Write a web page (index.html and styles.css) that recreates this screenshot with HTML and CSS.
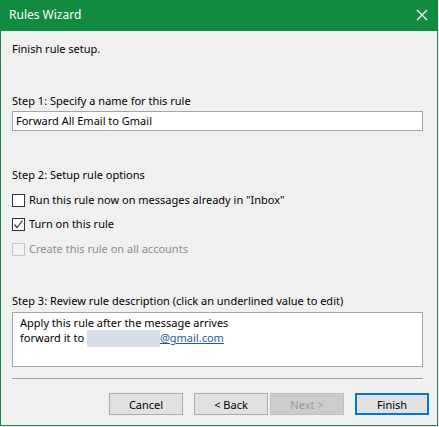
FILE: index.html
```html
<!DOCTYPE html>
<html>
<head>
<meta charset="utf-8">
<title>Rules Wizard</title>
<link rel="stylesheet" href="styles.css">
</head>
<body>
<div class="window">
  <div class="titlebar">
    <span class="title">Rules Wizard</span>
    <svg class="close" width="12" height="12" viewBox="0 0 12 12"><path d="M1 1 L11 11 M11 1 L1 11" stroke="#fff" stroke-width="1.1" fill="none"/></svg>
  </div>
  <div class="content">
    <div class="line intro">Finish rule setup.</div>

    <div class="line step">Step 1: Specify a name for this rule</div>
    <div class="textbox">Forward All Email to Gmail</div>

    <div class="line step">Step 2: Setup rule options</div>
    <div class="options">
      <div class="option"><span class="check"></span><span>Run this rule now on messages already in "Inbox"</span></div>
      <div class="option"><span class="check checked"><svg width="11" height="11" viewBox="0 0 11 11"><path d="M1.5 5.5 L4 8.5 L9.5 1.5" stroke="#333" stroke-width="1.2" fill="none"/></svg></span><span>Turn on this rule</span></div>
      <div class="option disabled"><span class="check"></span><span>Create this rule on all accounts</span></div>
    </div>

    <div class="line step">Step 3: Review rule description (click an underlined value to edit)</div>
    <div class="description">
      <div class="desc-line">Apply this rule after the message arrives</div>
      <div class="desc-line">forward it to <span class="redacted"></span><a class="link">@gmail.com</a></div>
    </div>

    <div class="separator"></div>
  </div>
  <div class="buttons">
    <button class="btn">Cancel</button>
    <button class="btn back">&lt; Back</button>
    <button class="btn next" disabled>Next &gt;</button>
    <button class="btn finish">Finish</button>
  </div>
</div>
</body>
</html>
```

FILE: styles.css
```css
html, body {
  margin: 0;
  padding: 0;
  background: #f0f0f0;
}
body {
  font-family: "Noto Sans", "Open Sans", sans-serif;
  font-size: 11px;
  color: #000;
}
.window {
  width: 436px;
  height: 425px;
  border: 1px solid #138a42;
  border-top: none;
  background: #f0f0f0;
  display: flex;
  flex-direction: column;
}
.titlebar {
  height: 31px;
  background: #138a42;
  color: #fff;
  display: flex;
  align-items: center;
  justify-content: space-between;
  padding: 0 10px 0 9px;
  margin: 0 -1px;
}
.title {
  font-size: 12px;
  line-height: 16px;
  margin-top: -1px;
}
.close {
  margin-top: -2px;
}
.content {
  padding: 0 14px 0 11px;
  display: flex;
  flex-direction: column;
}
.line {
  line-height: 16px;
  height: 16px;
  white-space: nowrap;
}
.intro { margin-top: 10px; }
.step { margin-top: 36px; }
.textbox {
  margin-top: 2px;
  height: 18px;
  border: 1px solid #a5a5a5;
  background: #fff;
  line-height: 18px;
  padding-left: 3px;
}
.options {
  display: flex;
  flex-direction: column;
  margin-top: 9px;
  gap: 8px;
}
.option {
  display: flex;
  align-items: center;
  height: 16px;
  line-height: 16px;
  gap: 4px;
  white-space: nowrap;
}
.option:last-child { margin-top: 1px; }
.check {
  width: 11px;
  height: 11px;
  border: 1px solid #333;
  background: #fff;
  display: flex;
  align-items: center;
  justify-content: center;
  flex: none;
}
.disabled { color: #8d8d8d; }
.disabled .check {
  border-color: #c6c6c6;
  background: #f3f3f3;
}
.description {
  margin-top: 3px;
  height: 50px;
  border: 1px solid #a5a5a5;
  background: #fff;
  padding: 3px 0 0 7px;
}
.desc-line {
  line-height: 14px;
  height: 14px;
  white-space: nowrap;
}
.redacted {
  display: inline-block;
  width: 73px;
  height: 17px;
  background: #d6dfe9;
  vertical-align: -5px;
}
.link {
  color: #1f5ba3;
  text-decoration: underline;
}
.separator {
  margin-top: 11px;
  height: 1px;
  background: #a0a0a0;
}
.buttons {
  display: flex;
  justify-content: flex-end;
  padding: 14px 8px 0 0;
  gap: 11px;
}
.btn {
  width: 74px;
  height: 22px;
  box-sizing: border-box;
  border: 1px solid #adadad;
  background: #e1e1e1;
  font-family: inherit;
  font-size: 11px;
  color: #000;
  padding: 0;
  margin: 0;
}
.back { margin-right: -9px; }
.next {
  background: #cccccc;
  border-color: #bfbfbf;
  color: #9b9b9b;
}
.finish {
  border: 2px solid #0078d7;
}
```
